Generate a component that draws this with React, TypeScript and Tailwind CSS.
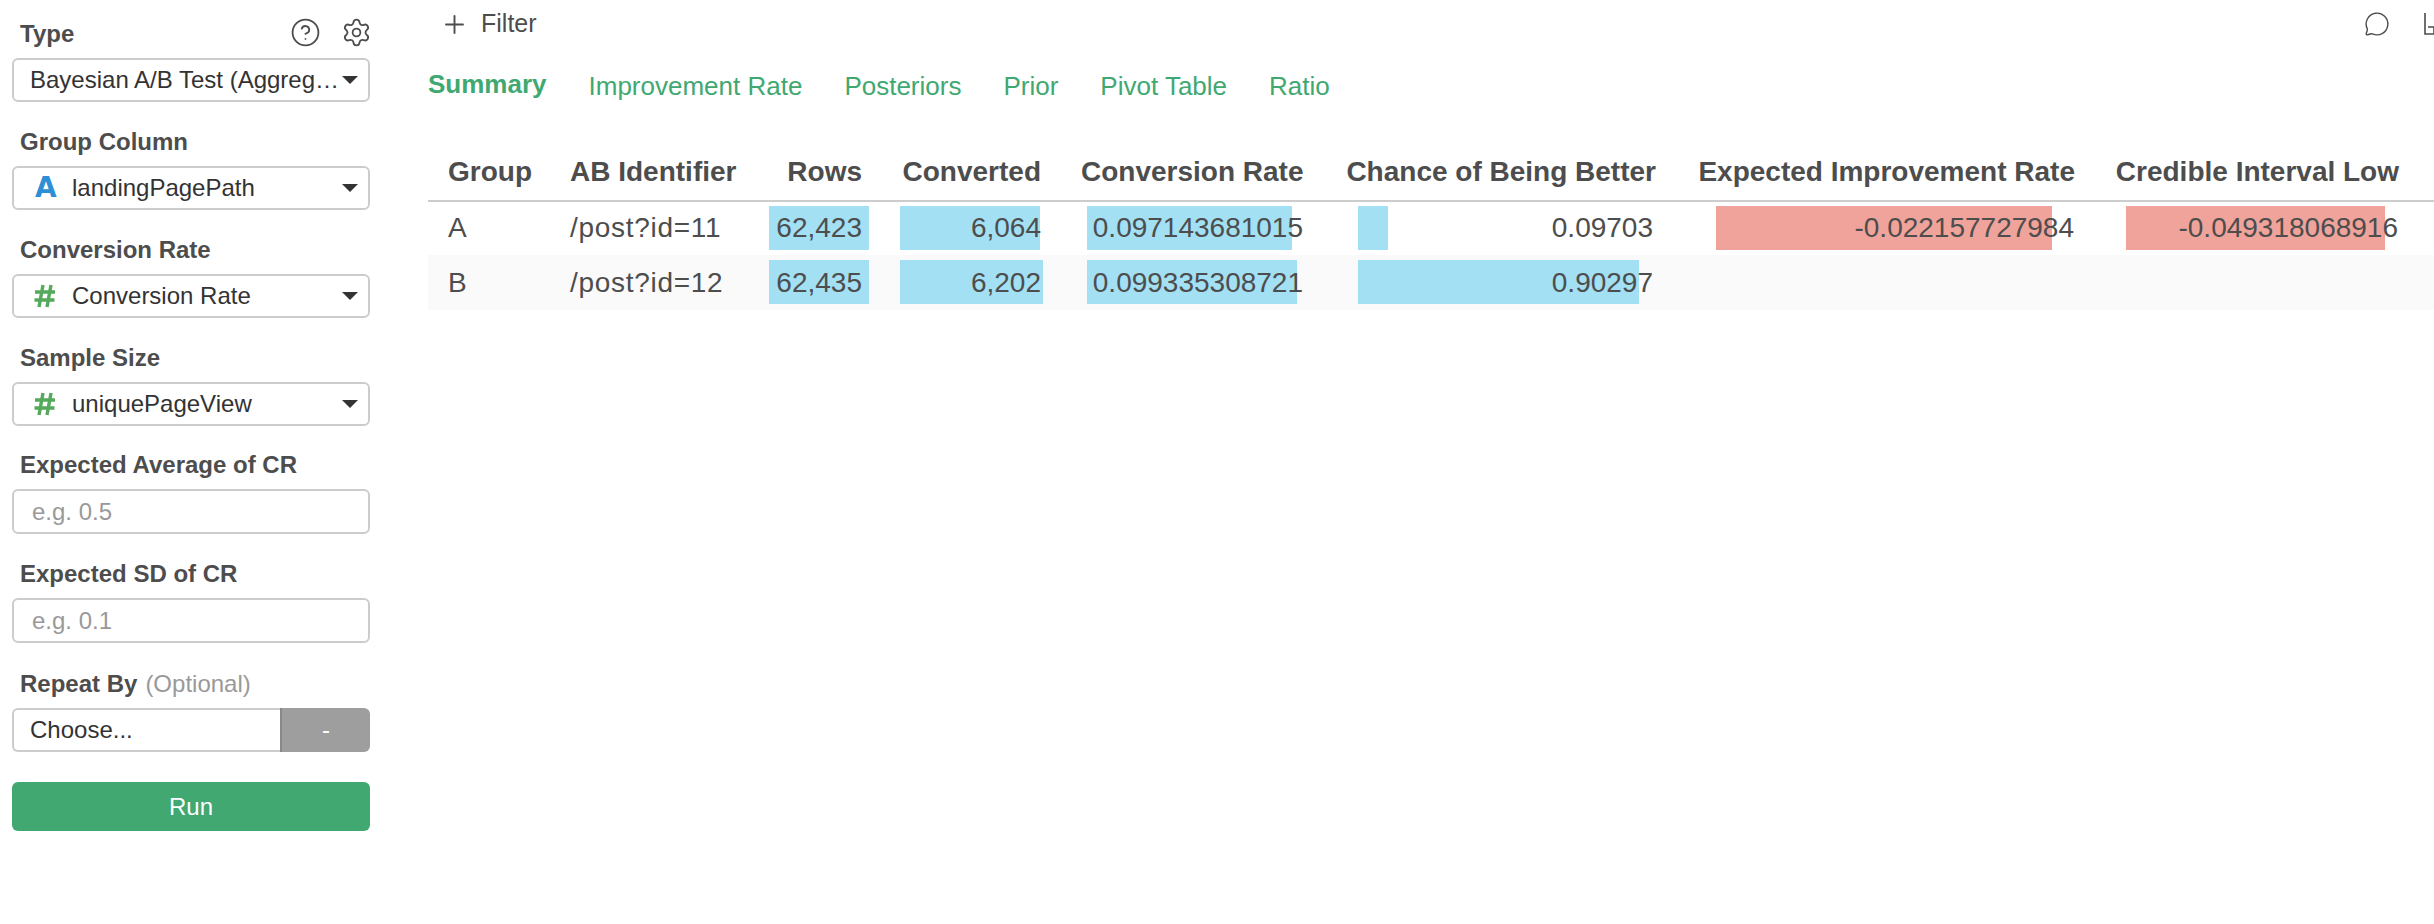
import { CircleHelp, MessageCircle, Plus, Settings } from "lucide-react"

const ColumnIcon = ({ kind }: { kind: string }) => {
    if (kind === "A") {
        return <span className="w-[38px] shrink-0 pl-[1px] text-[28px] leading-none font-bold text-[#2d8fd5] [font-family:'DejaVu_Sans',sans-serif]">A</span>
    }
    return (
        <span className="w-[38px] shrink-0 flex">
            <svg width="22" height="24" viewBox="0 0 22 24" fill="none" stroke="#55a95a" strokeWidth="3.4">
                <path d="M9 1 L5 23 M17 1 L13 23 M1 8 H21 M0.5 16 H20.5" />
            </svg>
        </span>
    )
}

const Caret = () => <span className="ml-auto mr-[10px] shrink-0 border-x-[8px] border-t-[8px] border-x-transparent border-t-[#333333]"></span>

const Label = ({ children }: { children: React.ReactNode }) => (
    <div className="h-8 mb-2 px-[8px] flex items-center font-bold text-[24px] text-[#4d4d4d]">{children}</div>
)

const SelectBox = ({ icon, value }: { icon?: string; value: string }) => (
    <div className={`h-11 flex items-center border-2 border-[#cccccc] rounded-[6px] bg-white text-[24px] text-[#333333] ${icon ? "pl-[20px]" : "pl-[16px]"}`}>
        {icon && <ColumnIcon kind={icon} />}
        <span className="whitespace-nowrap">{value}</span>
        <Caret />
    </div>
)

const Sidebar = () => (
    <aside className="w-[428px] shrink-0 pt-[18px] pl-3 pr-[58px]">
        <div className="relative">
            <Label>Type</Label>
            <div className="absolute -right-[2px] -top-[1px] flex items-center gap-5 text-[#4d4d4d]">
                <CircleHelp size={31} strokeWidth={1.4} />
                <Settings size={31} strokeWidth={1.4} />
            </div>
        </div>
        <div className="mb-6">
            <SelectBox value="Bayesian A/B Test (Aggreg…" />
        </div>
        <Label>Group Column</Label>
        <div className="mb-6"><SelectBox icon="A" value="landingPagePath" /></div>
        <Label>Conversion Rate</Label>
        <div className="mb-6"><SelectBox icon="#" value="Conversion Rate" /></div>
        <Label>Sample Size</Label>
        <div className="mb-[23px]"><SelectBox icon="#" value="uniquePageView" /></div>
        <Label>Expected Average of CR</Label>
        <div className="mb-6 h-[45px] flex items-center border-2 border-[#cccccc] rounded-[6px] px-[18px] text-[24px] text-[#999999]">e.g. 0.5</div>
        <Label>Expected SD of CR</Label>
        <div className="mb-[25px] h-[45px] flex items-center border-2 border-[#cccccc] rounded-[6px] px-[18px] text-[24px] text-[#999999]">e.g. 0.1</div>
        <Label>
            Repeat By <span className="ml-[8px] font-normal text-[#999999]">(Optional)</span>
        </Label>
        <div className="flex h-11 text-[24px]">
            <div className="flex-1 flex items-center border-2 border-r-0 border-[#cccccc] rounded-l-[6px] pl-[16px] text-[#333333]">Choose...</div>
            <div className="w-[90px] flex items-center justify-center bg-[#9e9e9e] border-l-2 border-[#888888] rounded-r-[6px] text-white">-</div>
        </div>
        <div className="mt-[30px] h-[49px] flex items-center justify-center bg-[#41a871] rounded-[6px] text-white text-[24px]">Run</div>
    </aside>
)

const tabs = ["Improvement Rate", "Posteriors", "Prior", "Pivot Table", "Ratio"]

const headers = [
    { name: "Group", cls: "w-[122px] text-left" },
    { name: "AB Identifier", cls: "w-[206px] text-left" },
    { name: "Rows", cls: "w-[126px] text-right" },
    { name: "Converted", cls: "w-[179px] text-right" },
    { name: "Conversion Rate", cls: "w-[262px] text-right" },
    { name: "Chance of Being Better", cls: "w-[353px] text-right" },
    { name: "Expected Improvement Rate", cls: "w-[419px] text-right" },
    { name: "Credible Interval Low", cls: "w-[324px] text-right" },
]

const Bar = ({ cls, color, value, textCls }: { cls: string; color: string; value: string; textCls?: string }) => (
    <td className="relative px-5 text-right">
        <div className={`absolute h-11 ${color} ${cls}`}></div>
        <span className={`relative ${textCls ?? ""}`}>{value}</span>
    </td>
)

const BLUE = "bg-[#a3e0f4]"
const RED = "bg-[#f0a39b]"

const ResultTable = () => (
    <table className="mt-[39px] table-fixed border-collapse w-[2091px] text-[28px] text-[#4d4d4d]">
        <thead>
            <tr className="h-[56px] border-b-2 border-[#cccccc]">
                {headers.map((h) => (
                    <th key={h.name} className={`px-5 pb-[2px] font-bold whitespace-nowrap ${h.cls}`}>{h.name}</th>
                ))}
                <th className="w-[100px]"></th>
            </tr>
        </thead>
        <tbody>
            <tr className="h-[54px] [&>td]:pb-[2px]">
                <td className="px-5">A</td>
                <td className="px-5 tracking-[0.7px]">/post?id=11</td>
                <Bar color={BLUE} cls="top-[4px] left-[13px] w-[100px]" value="62,423" />
                <Bar color={BLUE} cls="top-[4px] left-[18px] w-[140px]" value="6,064" />
                <Bar color={BLUE} cls="top-[4px] left-[26px] w-[205px]" value="0.097143681015" />
                <Bar color={BLUE} cls="top-[4px] left-[35px] w-[30px]" value="0.09703" textCls="right-[3px]" />
                <Bar color={RED} cls="top-[4px] left-[40px] w-[336px]" value="-0.022157727984" textCls="right-[1px]" />
                <Bar color={RED} cls="top-[4px] left-[31px] w-[259px]" value="-0.049318068916" textCls="right-[1px]" />
                <td></td>
            </tr>
            <tr className="h-[55px] bg-[#fafafa]">
                <td className="px-5">B</td>
                <td className="px-5 tracking-[0.7px]">/post?id=12</td>
                <Bar color={BLUE} cls="top-[5px] left-[13px] w-[100px]" value="62,435" />
                <Bar color={BLUE} cls="top-[5px] left-[18px] w-[143px]" value="6,202" />
                <Bar color={BLUE} cls="top-[5px] left-[26px] w-[210px]" value="0.099335308721" />
                <Bar color={BLUE} cls="top-[5px] left-[35px] w-[281px]" value="0.90297" textCls="right-[3px]" />
                <td></td>
                <td></td>
                <td></td>
            </tr>
        </tbody>
    </table>
)

const App = () => {
    return (
        <div className="flex w-[2434px] h-[924px] overflow-hidden bg-white [font-family:'Liberation_Sans',Arial,sans-serif]">
            <Sidebar />
            <main className="flex-1 min-w-0 overflow-hidden">
                <div className="flex items-center h-[48px] pl-[12px] text-[#4d4d4d]">
                    <Plus size={29} strokeWidth={1.6} />
                    <span className="ml-[12px] text-[25px]">Filter</span>
                    <MessageCircle size={26} strokeWidth={1.3} className="ml-auto mr-[34px]" />
                    <svg width="10" height="22" viewBox="0 0 10 22" fill="none" stroke="#4d4d4d" strokeWidth="1.6" className="shrink-0">
                        <path d="M1 0 V21 H10 M4 14 H10 V21" />
                    </svg>
                </div>
                <div className="flex items-center h-[40px] mt-[18px] text-[26px] text-[#41a871]">
                    <span className="font-bold mr-[42px] -translate-y-[2px]">Summary</span>
                    <div className="flex gap-[42px]">
                        {tabs.map((t) => (
                            <span key={t}>{t}</span>
                        ))}
                    </div>
                </div>
                <ResultTable />
            </main>
        </div>
    )
}
export default App
